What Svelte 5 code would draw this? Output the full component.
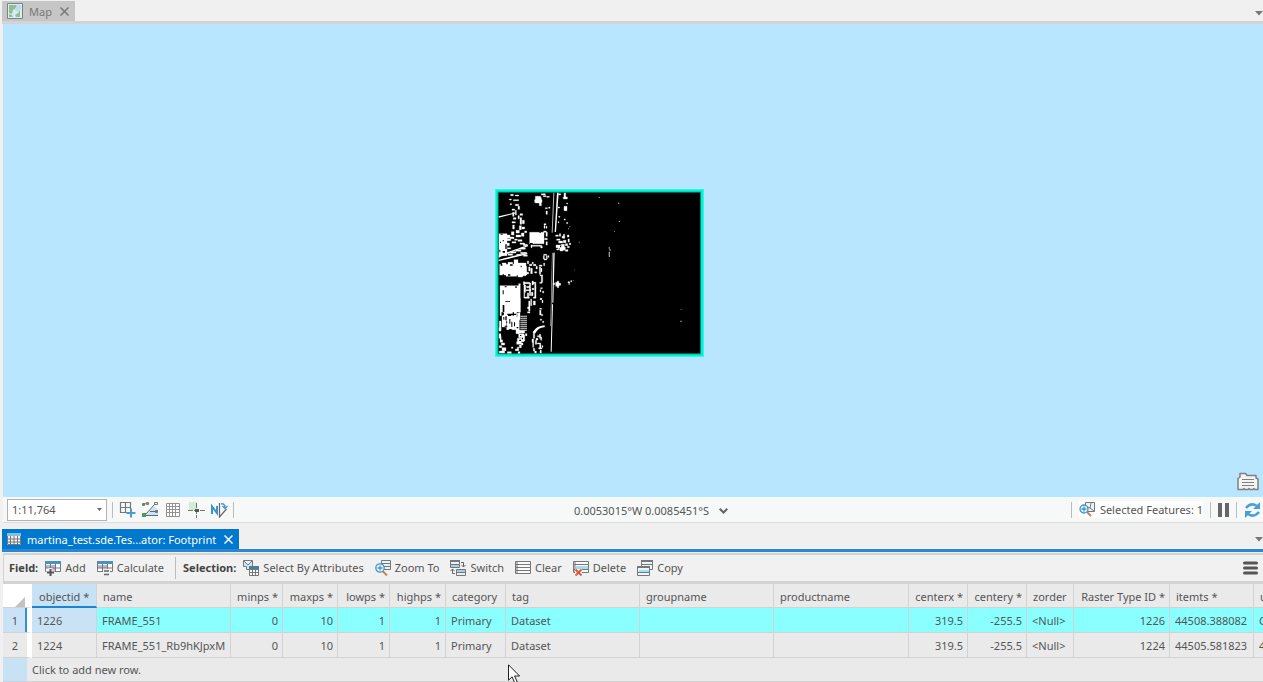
<script>
  const columns = [
    { label: 'objectid *', width: 65, active: true },
    { label: 'name', width: 134 },
    { label: 'minps *', width: 52, num: true },
    { label: 'maxps *', width: 55, num: true },
    { label: 'lowps *', width: 52, num: true },
    { label: 'highps *', width: 56, num: true },
    { label: 'category', width: 60 },
    { label: 'tag', width: 134 },
    { label: 'groupname', width: 134 },
    { label: 'productname', width: 135 },
    { label: 'centerx *', width: 59, num: true },
    { label: 'centery *', width: 59, num: true },
    { label: 'zorder', width: 47 },
    { label: 'Raster Type ID *', width: 96, num: true },
    { label: 'itemts *', width: 84 },
    { label: 'uri', width: 60 }
  ];
  const rows = [
    ['1226', 'FRAME_551', '0', '10', '1', '1', 'Primary', 'Dataset', '', '', '319.5', '-255.5', '<Null>', '1226', '44508.388082', 'C'],
    ['1224', 'FRAME_551_Rb9hKJpxM', '0', '10', '1', '1', 'Primary', 'Dataset', '', '', '319.5', '-255.5', '<Null>', '1224', '44505.581823', '44']
  ];
  let selected = $state(0);
  const tableWidth = 29 + columns.reduce((sum, c) => sum + c.width, 0);

  // Bright and dark cells of the raster, as x, y, width, height
  const bright = [
    [62,30,8,4],[76,32,10,3],[58,44,6,3],[70,46,16,3],[60,58,5,3],[76,60,10,4],[84,66,5,9],[66,74,8,4],[68,84,4,12],[76,78,3,14],[70,100,8,5],[66,112,10,4],[68,122,5,12],[84,94,4,9],[90,88,8,5],[90,100,5,20],[97,108,6,10],[88,124,6,12],[96,128,8,6],[104,140,6,5],[78,138,10,8],[64,142,8,10],[78,152,14,6],[94,146,8,10],
    [136,36,16,20],[134,46,22,8],[148,40,6,24],[154,28,12,4],[160,34,8,3],[170,36,8,3],[166,70,6,3],[168,80,4,10],[176,68,4,4],[222,26,5,12],[206,28,6,4],[220,38,12,6],[222,66,9,13],[204,68,5,3],[230,56,3,3],[206,96,4,3],[222,104,4,3],[230,114,3,4],[204,112,3,3],
    [162,118,6,4],[162,124,3,8],[168,126,3,6],[161,140,8,4],[168,144,4,12],[164,162,8,4],[168,172,4,10],[161,210,9,3],[160,214,3,10],[169,214,3,10],[162,224,8,3],[174,214,3,5],
    [119,144,43,34],[124,183,31,3],[123,182,3,8],[152,186,5,5],
    [27,148,24,66],[32,156,18,20],[50,152,10,10],[48,164,14,5],[60,158,12,5],[48,176,10,8],[52,190,10,4],[74,164,8,4],[66,172,12,4],[84,166,12,5],[90,176,14,4],[62,202,16,4],[54,208,14,5],[78,196,15,5],[92,190,14,5],[100,180,12,4],[80,210,12,3],[92,204,18,4],[100,212,12,4],
    [197,152,8,4],[208,148,4,8],[216,156,8,5],[220,150,4,12],[232,152,5,6],[200,164,10,4],[206,170,12,6],[220,168,8,7],[234,164,4,9],[198,182,14,8],[204,188,22,8],[214,180,9,18],[226,178,7,6],[232,186,6,4],[210,196,8,4],[226,196,8,5],[238,176,4,5],[200,194,6,3],
    [29,240,56,32],[36,236,12,8],[54,234,14,10],[72,226,12,22],[66,246,44,26],[84,236,24,36],[48,260,32,16],[94,256,14,18],[84,272,14,6],[112,230,4,8],[118,240,8,4],[116,248,4,12],[122,252,5,16],[130,240,8,4],[138,246,4,8],[134,262,6,4],[126,234,4,4],[108,264,8,5],
    [148,242,8,4],[148,248,4,22],[153,252,3,10],[150,272,8,3],[154,276,4,18],[149,294,7,3],[161,236,3,8],[152,310,5,3],[150,316,3,6],[158,320,3,6],[150,342,6,4],[156,348,3,7],[149,372,6,3],[149,378,4,14],[154,390,4,4],[151,404,4,4],[158,410,3,5],
    [34,304,57,79],[40,382,40,26],[50,406,30,30],[36,394,12,34],[30,304,4,90],[86,298,5,86],[82,386,8,20],[78,398,10,50],[28,410,5,30],[27,430,6,10],
    [100,292,4,48],[104,294,15,4],[104,302,3,22],[110,306,8,4],[108,316,15,3],[118,296,4,38],[126,290,4,12],[130,294,8,4],[134,300,4,38],[126,312,6,4],[124,324,5,10],[112,326,4,14],[104,338,14,4],[130,338,8,4],[130,350,6,12],[122,344,3,20],[116,350,4,30],[108,368,8,5],[104,344,4,20],[104,382,16,4],
    [84,438,20,8],[86,448,16,12],[82,462,20,10],[80,472,14,8],[96,452,8,18],[88,482,6,8],[82,488,4,8],[94,476,5,6],[106,448,5,6],[30,456,8,18],[27,448,6,14],[34,476,10,6],[28,484,7,6],[36,490,12,9],[28,500,16,6],[52,502,12,5],[76,494,10,5],[84,502,6,5],[64,488,5,4],
    [130,442,4,20],[126,464,5,10],[128,474,3,15],[130,492,4,8],[134,500,5,6],[148,450,4,12],[152,458,3,10],[138,462,6,5],[136,468,4,12],[142,476,10,3],[149,480,4,10],[146,490,10,4],[150,498,4,8],[142,454,6,3],[156,484,3,5],
    [197,294,10,12],[202,290,4,20],[207,297,5,6],[190,296,4,5],[234,292,5,4],[242,289,4,3],[236,298,4,2]
  ];
  const dark = [
    [38,200,7,5],[32,148,6,3],[30,172,3,4],[46,180,4,14],[28,196,3,8],[38,168,4,3],[120,176,8,3],[148,144,5,2],
    [60,240,8,4],[32,238,5,6],[92,244,3,5],[54,270,7,4],[38,270,4,4],
    [44,306,6,3],[38,318,3,12],[76,306,4,5],[46,350,14,2],[38,362,5,22],[52,388,26,4],[54,392,10,3],[46,396,4,12],[68,384,4,10],[58,404,3,14],[64,412,3,16],[44,424,8,3],[72,414,3,12],[40,398,3,8],[48,412,4,3],[92,302,9,38],[94,344,18,46],[36,386,6,5],[34,438,38,28],[58,434,7,8],[80,428,5,4],[90,452,4,3],[88,466,5,4],[96,460,3,5],[210,184,3,5],[206,192,3,3]
  ];
  const faint = [[384,55,4,4],[386,110,4,3],[326,38,4,3],[372,140,3,2],[356,188,3,6],[358,194,4,5],[356,202,4,16],[571,409,4,4],[572,375,3,2],[252,256,3,2],[250,288,2,2],[266,172,3,3],[234,132,3,3],[238,126,3,3]];
  const cells = (list) => list.map(([x, y, w, h]) => `M${x} ${y}h${w}v${h}h-${w}z`).join('');
  const stripes = cells(Array.from({ length: 8 }, (_, i) => [91, 394 + i * 6, 20, 3]));
</script>

<main>
  <header class="tabs">
    <div class="tab">
      <svg width="16" height="16" viewBox="0 0 16 16">
        <path fill="#dcecf5" stroke="#808080" d="M.5.5h15v15H.5z" />
        <path fill="#91bf94" d="M2 2h8L8 6l-2 1-1 4-3-1zM2 11l3 1 1 2H2zM13 7v7H9l-1-2 3-2z" />
        <path fill="#b9def0" d="M10 2h4v4l-4 3-2-2z" />
      </svg>
      <span>Map</span>
      <button class="close" aria-label="Close map"><svg width="9" height="9" viewBox="0 0 9 9"><path stroke-width="1.500" d="M.5.5l8 8M8.500.5l-8 8" /></svg></button>
    </div>
    <button class="drop" aria-label="Map views"><svg width="8" height="5" viewBox="0 0 8 5"><path d="M0 0h8L4 4.500z" /></svg></button>
  </header>

  <section class="map" aria-label="Map">
    <svg class="footprint" width="209" height="168" viewBox="15 14 627 504">
      <path fill="#2df5ff" d="M15 14h627v504H15z" />
      <path fill="#00f5c4" d="M18 17h621v498H18z" />
      <path fill="#008577" d="M23 22h610v488H23z" />
      <path d="M26 25h604v482H26z" />
      <g fill="#fff">
        <path d={cells(bright)} stroke="#fff" stroke-width="1" />
        <path d="M26 96l52-12v3L26 100zM26 213l88-31v4l-66 24-22 10zM26 226l46-12 40-8v4l-50 12-36 8zM201 25h5l-8 118h-4zM190 205h4l-4 150h-3zM186 360h3l-4 142h-3z" />
        <path d="M128 444q10-19 36-21v6q-18-1-28 18z" />
      </g>
      <path d={cells(dark)} />
      <path fill="#bbb" d="M190 25h3l-5 120h-3zM186 205h2l-5 220h-2z" />
      <path fill="#ddd" d={stripes} />
      <path fill="#999" d={cells(faint)} />
    </svg>
    <button class="popup" aria-label="Contents">
      <svg width="22" height="19" viewBox="0 0 22 19">
        <path fill="#f4f4f4" stroke="#808080" stroke-width="1.500" stroke-linejoin="round" d="M1 17.500V6.500L3 5V1.500h5.500L10 3.500h9V6l2 1v10.500h-3l-1-1-1 1h-3l-1-1-1 1H8l-1-1-1 1z" />
        <path stroke="#808080" d="M5 7.500h12M5 10.500h12M5 13.500h12" />
      </svg>
    </button>
  </section>

  <div class="status">
    <div class="left">
      <select aria-label="Scale"><option>1:11,764</option></select>
      <i></i>
      <button aria-label="Add grid"><svg width="17" height="17" viewBox="0 0 17 17"><path fill="none" stroke="#777" stroke-width="1.200" d="M1.500 1.500h10v10h-10zM6.500 1v10M1 6.500h11" /><path fill="#f7f9f9" d="M8 8h6v6H8z" /><path stroke="#4b9bd2" stroke-width="2" d="M12 7.500v9M7.500 12h9" /></svg></button>
      <button aria-label="Snapping"><svg width="17" height="17" viewBox="0 0 17 17"><path fill="#c4e6f8" d="M3 14L12 5l4 4v5z" /><path fill="none" stroke="#666" d="M1 3.500l5-1.500M3 14L13 3M8 10.500h7M4 14.500h12" /><path fill="none" stroke="#777" d="M.5 2.500h2v2h-2zM4.500 1.500h2v2h-2zM12.500 1.500h3v2h-3zM13.500 9.500h2v2h-2z" /><path fill="#4e9a58" d="M0 12h4v4H0z" /></svg></button>
      <button aria-label="Grid"><svg width="14" height="14" viewBox="0 0 14 14"><path fill="#fff" d="M0 0h14v14H0z" /><path fill="none" stroke="#929292" d="M.5.5h13v13H.5zM3.500 0v14M6.500 0v14M9.500 0v14M0 3.500h14M0 6.500h14M0 9.500h14" /></svg></button>
      <button aria-label="Corrections"><svg width="17" height="16" viewBox="0 0 17 16"><path fill="#d5ecd3" d="M1 0h8v8H1z" /><path fill="none" stroke="#777" d="M0 8.500h17M8.500 1v15" stroke-dasharray="5 1" /><path fill="#555" d="M7 7h4v3H7z" /></svg></button>
      <button aria-label="Rotation"><svg width="17" height="16" viewBox="0 0 17 16"><path fill="none" stroke="#3f91cb" stroke-width="2" d="M1 12V4.500l5 6.500V4" /><path fill="none" stroke="#666" stroke-width="1.200" d="M8.500 1v14l7-8" /><path fill="none" stroke="#4b9bd2" stroke-width="1.500" d="M10 2q4-1 4 4M11.500 4L14 6.500 16.500 4" /></svg></button>
      <i></i>
    </div>
    <button class="coords">0.0053015°W 0.0085451°S <svg width="9" height="6" viewBox="0 0 9 6"><path fill="none" stroke="#666" stroke-width="2" d="M.7.7l3.800 3.800L8.300.7" /></svg></button>
    <div class="right">
      <i></i>
      <button class="features"><svg width="17" height="17" viewBox="0 0 17 17"><path fill="#e8f3fa" stroke="#777" d="M6.500 1.500h9v9h-9zM7 5l4 2 1-5M11 7l4 3" /><path stroke="#c08456" stroke-width="2" d="M8 11l4 4" /><circle cx="5" cy="8" r="4" fill="#e9f6ff" stroke="#4293c9" stroke-width="1.300" /><path stroke="#4293c9" stroke-width="1.300" d="M2.500 8h5M5 5.500v5" /></svg>Selected Features: 1</button>
      <i></i>
      <button aria-label="Pause drawing"><svg width="11" height="14" viewBox="0 0 11 14"><path fill="#666" d="M0 0h4v14H0zM7 0h4v14H7z" /></svg></button>
      <i></i>
      <button aria-label="Refresh"><svg width="17" height="16" viewBox="0 0 17 16"><path fill="none" stroke="#4b9fd6" stroke-width="2.500" d="M2 6q5-6 11-2M15 10q-5 6-11 2" /><path fill="#4b9fd6" d="M16 0v7H9zM1 16V9h7z" /></svg></button>
    </div>
  </div>

  <div class="tabs table-tabs">
    <div class="tab">
      <svg width="14" height="12" viewBox="0 0 14 12"><path fill="#f5f5f5" d="M0 0h14v12H0z" /><path fill="none" stroke="#777" d="M.5 1v10.500h13V1M3.500 3v9M7 3v9M10.500 3v9M0 6h14M0 9h14" /><path fill="#7ec0e6" d="M0 0h14v3H0z" /></svg>
      <span>martina_test.sde.Tes...ator: Footprint</span>
      <button class="close" aria-label="Close table"><svg width="9" height="9" viewBox="0 0 9 9"><path stroke-width="1.500" d="M.5.5l8 8M8.500.5l-8 8" /></svg></button>
    </div>
    <button class="drop" aria-label="Tables"><svg width="8" height="5" viewBox="0 0 8 5"><path d="M0 0h8L4 4.500z" /></svg></button>
  </div>

  <div class="tools">
    <b>Field:</b>
    <button>
      <svg width="16" height="16" viewBox="0 0 16 16"><path fill="#fff" d="M1 2h14v10H1z" /><path fill="#bbb5da" d="M1 5h9v3H1zM6 8h4v3H6z" /><path fill="none" stroke="#777" d="M.5 1.500h15v10H.5zM0 8h16M5.500 4v8M10.500 4v8" /><path fill="#4a92b8" d="M0 1h16v3H0z" /><path stroke="#f0f0f0" stroke-width="4" d="M5.500 8v8M1.500 12.500h8" /><path stroke="#555" stroke-width="2" d="M5.500 9v7M2 12.500h7" /></svg>Add
    </button>
    <button>
      <svg width="16" height="16" viewBox="0 0 16 16"><path fill="#fff" d="M1 2h14v10H1z" /><path fill="#bbb5da" d="M1 5h9v3H1z" /><path fill="none" stroke="#777" d="M.5 1.500h15v10H.5zM0 8h16M5.500 4v8M10.500 4v8" /><path fill="#4a92b8" d="M0 1h16v3H0z" /><path fill="#f0f0f0" d="M6 9h7v7H6z" /><path stroke="#666" stroke-width="1.500" d="M7 11h5M7 14.500h5" /></svg>Calculate
    </button>
    <i></i>
    <b>Selection:</b>
    <button>
      <svg width="16" height="16" viewBox="0 0 16 16"><path fill="#c7e8f7" stroke="#777" d="M.5.5h9v9h-6v-3h-3zM1 1l4 4 4-4" /><path fill="#fff" stroke="#777" d="M6.500 6.500h9v9h-9zM6 12.500h10M9.500 8v8M12.500 8v8M6 9.500h10" /><path fill="#4a7f9b" d="M6 6h10v3H6z" /></svg>Select By Attributes
    </button>
    <button>
      <svg width="16" height="16" viewBox="0 0 16 16"><path fill="#e8f3f8" stroke="#777" d="M6.500.5h9v9h-9zM6 3.500h10M6 6.500h10" /><path stroke="#c58656" stroke-width="2" d="M7 10.500l5 5" /><circle cx="5" cy="8" r="4.200" fill="#e9f6ff" stroke="#4a93c6" stroke-width="1.300" /><path stroke="#4a93c6" stroke-width="1.300" d="M2.500 8h5M5 5.500v5" /></svg>Zoom To
    </button>
    <button>
      <svg width="16" height="16" viewBox="0 0 16 16"><path fill="#e8f0f2" stroke="#777" d="M.5.5h9v7h-9zM6.500 9.500h9v6h-9zM6 12.500h10" /><path fill="#777" d="M0 0h10v2H0zM0 4h10v1H0z" /><path fill="#9bd3e8" d="M7 10h8v2H7zM1 5h8v2H1z" /><path fill="none" stroke="#666" d="M11 2.500h2.500V7M11.500 5l2 2 2-2M5 13.500H2.500V9M.5 11l2-2 2 2" /></svg>Switch
    </button>
    <button>
      <svg width="16" height="14" viewBox="0 0 16 14"><path fill="#fafafa" stroke="#777" d="M.5.5h15v12H.5zM0 3.500h16M0 6.500h16M0 9.500h16M2 0v13" /></svg>Clear
    </button>
    <button>
      <svg width="16" height="16" viewBox="0 0 16 16"><path fill="#fafafa" stroke="#777" d="M.5 1.500h15v11H.5zM0 4.500h16M0 9.500h16M2 1v12" /><path fill="#a8dcf0" d="M3 6h12v3H3z" /><path fill="#f0f0f0" d="M2 9h7v7H2z" /><path stroke="#dc5538" stroke-width="1.800" d="M2.500 9.500l6 6M8.500 9.500l-6 6" /></svg>Delete
    </button>
    <button>
      <svg width="16" height="16" viewBox="0 0 16 16"><path fill="#eaf6fb" stroke="#777" d="M4.500.5h11v9h-11z" /><path fill="#777" d="M4 0h12v2H4zM4 4h12v1H4z" /><path fill="#eaf6fb" stroke="#777" d="M.5 6.500h12v9H.5zM0 12.500h12" /><path fill="#777" d="M0 6h13v2H0z" /><path fill="#a8dcf0" d="M2 10h10v2H2z" /></svg>Copy
    </button>
    <button class="menu" aria-label="Menu"><svg width="15" height="14" viewBox="0 0 15 14"><path stroke="#555" stroke-width="3" stroke-linecap="round" d="M1.500 2h12M1.500 7h12M1.500 12h12" /></svg></button>
  </div>

  <div class="table-wrap">
    <table style:width="{tableWidth}px">
      <colgroup>
        <col class="num-col" />
        {#each columns as c}<col style:width="{c.width}px" />{/each}
      </colgroup>
      <thead>
        <tr>
          <th class="corner" aria-label="Row"><svg width="10" height="10" viewBox="0 0 10 10"><path fill="#c3c3c3" d="M10 0v10H0z" /></svg></th>
          {#each columns as c}<th class:num={c.num} class:active={c.active}>{c.label}</th>{/each}
        </tr>
      </thead>
      <tbody>
        {#each rows as row, r}
          <tr class:selected={r === selected} onclick={() => (selected = r)}>
            <td class="index">{r + 1}</td>
            {#each row as value, i}<td class:num={columns[i].num}><span>{value}</span></td>{/each}
          </tr>
        {/each}
      </tbody>
    </table>
    <button class="new-row">Click to add new row.</button>
  </div>

  <svg class="cursor" width="13" height="20" viewBox="0 0 13 20"><path fill="#fff" stroke="#222" d="M.5.800v15.500l3.600-3.500 2.600 6 2.500-1-2.600-5.800h5z" /></svg>
</main>

<style>
  :global(body) { margin: 0; background: #f0f0f0; overflow: hidden; }
  main { position: relative; display: flex; flex-direction: column; height: 100vh; box-sizing: border-box; padding-left: 3px; overflow: hidden; color: #555; font: 11px/16px "Noto Sans", "Open Sans", sans-serif; }
  button { display: inline-flex; align-items: center; padding: 0; border: 0; background: none; color: inherit; font: inherit; white-space: nowrap; }
  svg { display: block; flex: none; }
  i { flex: none; width: 1px; height: 16px; background: #bcbcbc; }

  .tabs { display: flex; justify-content: space-between; align-items: flex-end; flex: none; height: 21px; border-bottom: 3px solid #d3d3d3; margin-left: -1px; }
  .tab { display: flex; align-items: center; gap: 6px; height: 20px; padding: 0 6px 0 5px; background: #c6c6c6; color: #777; white-space: nowrap; }
  .tab span { padding-top: 2px; }
  .close { margin-left: 2px; }
  .close path { stroke: currentColor; fill: none; }
  .drop { height: 16px; }
  .drop path { fill: #777; }

  .map { position: relative; flex: 1; min-height: 200px; background: #b8e5ff; }
  .footprint { position: absolute; left: 39%; top: 35%; margin: -1px 0 0 1px; }
  .popup { position: absolute; right: 4px; bottom: 6px; }

  .status { display: grid; grid-template-columns: 1fr auto 1fr; align-items: center; flex: none; height: 25px; background: #f7f9f9; border-bottom: 1px solid #dcdcdc; }
  .left, .right { display: flex; align-items: center; }
  .left { gap: 5px; padding-left: 4px; }
  .left button { width: 18px; justify-content: center; }
  .right { gap: 7px; justify-content: flex-end; padding-right: 2px; }
  select { appearance: none; width: 100px; height: 22px; padding: 0 4px; border: 1px solid #b2b2b2; border-radius: 0; color: inherit; font: inherit; background: #fff url("data:image/svg+xml,%3Csvg xmlns='http://www.w3.org/2000/svg' width='5' height='3'%3E%3Cpath fill='%23666' d='M0 0h5L2.500 3z'/%3E%3C/svg%3E") no-repeat right 4px center / 5px 3px; }
  .coords { gap: 10px; margin-left: 36px; padding-top: 2px; }
  .features { gap: 4px; background: #fff; }

  .table-tabs { height: 26px; border-bottom-color: #2a88d3; }
  .table-tabs .tab { background: #0078d0; color: #fff; }
  .table-tabs .drop { height: 20px; }

  .tools { display: flex; align-items: center; flex: none; gap: 11px; height: 26px; margin-top: 1px; padding: 0 5px; background: #f1f1f1; border: solid #d3d3d3; border-width: 2px 0 3px 1px; }
  .tools button { gap: 4px; }
  .tools b { margin-right: -4px; color: #444; }
  .tools i { height: 22px; margin-right: -4px; }
  .tools .menu { margin-left: auto; }

  .table-wrap { flex: none; overflow: hidden; background: #eaeaea; }
  table { table-layout: fixed; border-collapse: separate; border-spacing: 0; }
  .num-col { width: 29px; }
  th, td { box-sizing: border-box; height: 25px; border: solid #d2d2d2; border-width: 0 1px 1px 0; font-weight: 400; text-align: left; white-space: nowrap; overflow: hidden; }
  th { height: 24px; padding: 2px 6px 0; }
  td { padding: 2px 4px 0 5px; }
  td span { display: block; overflow: hidden; }
  .num { text-align: right; }
  th.num { padding: 2px 4px 0; }
  .corner { background: #fff; padding: 0 0 0 12px; border-right: 5px solid #fff; vertical-align: bottom; }
  th.active { padding: 3px 7px 0; background: #c7e1f5; border-bottom: 2px solid #1a84d6; }
  td.index { padding: 2px 3px 0; border-right: 5px solid #fff; text-align: center; }
  .selected td { background: #8affff; }
  .selected td.index, .selected td:nth-child(2) { background: #cae2f5; }
  .selected td.index { box-shadow: inset -2px 0 #2f92d8; }
  .new-row { width: 100%; height: 24px; padding-left: 29px; border-bottom: 1px solid #d2d2d2; background: linear-gradient(#c7e1f5, #c7e1f5) no-repeat left / 24px 100%; }

  .cursor { position: absolute; left: 508px; bottom: -2px; }
</style>
